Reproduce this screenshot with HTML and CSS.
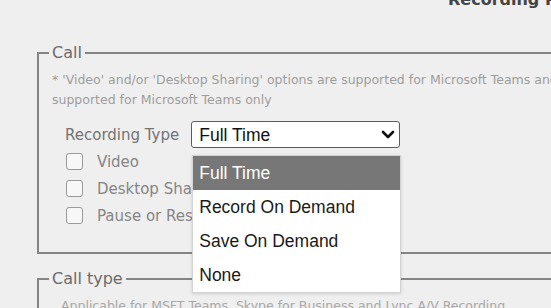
FILE: index.html
```html
<!DOCTYPE html>
<html lang="en">
<head>
  <meta charset="UTF-8">
  <meta name="viewport" content="width=device-width, initial-scale=1.0">
  <title>Recording Profile</title>
  <link rel="stylesheet" href="styles.css">
</head>
<body>
  <!-- Page title -->
  <div class="page-title">Recording Profile</div>

  <div class="form-area">
    <!-- Call options -->
    <fieldset class="group">
      <legend>Call</legend>
      <p class="note">* 'Video' and/or 'Desktop Sharing' options are supported for Microsoft Teams and Skype for Business.<br>supported for Microsoft Teams only</p>

      <div class="field-row">
        <label class="field-label" for="rec-type">Recording Type</label>
        <div class="select-wrap">
          <select id="rec-type" class="select">
            <option>Full Time</option>
            <option>Record On Demand</option>
            <option>Save On Demand</option>
            <option>None</option>
          </select>
          <svg class="chevron" width="14" height="9" viewBox="0 0 14 9">
            <path d="M2 2 L7 7 L12 2" fill="none" stroke="#111" stroke-width="2.6" stroke-linecap="round" stroke-linejoin="round"/>
          </svg>

          <!-- Open dropdown list -->
          <ul class="dropdown">
            <li class="selected">Full Time</li>
            <li>Record On Demand</li>
            <li>Save On Demand</li>
            <li>None</li>
          </ul>
        </div>
      </div>

      <label class="check-row"><input type="checkbox" class="check"> Video</label>
      <label class="check-row"><input type="checkbox" class="check"> Desktop Sharing*</label>
      <label class="check-row"><input type="checkbox" class="check"> Pause or Resume Recording</label>
    </fieldset>

    <!-- Call type -->
    <fieldset class="group group-type">
      <legend>Call type</legend>
      <p class="note note-indent">Applicable for MSFT Teams, Skype for Business and Lync A/V Recording</p>
    </fieldset>
  </div>
</body>
</html>
```

FILE: styles.css
```css
body {
  margin: 0;
  height: 308px;
  overflow: hidden;
  background: #f0efef;
  font-family: "DejaVu Sans", Verdana, sans-serif;
  color: #666;
}

.page-title {
  margin-top: -10px;
  padding-left: 448px;
  font-size: 16px;
  line-height: 19px;
  font-weight: bold;
  color: #444;
  white-space: nowrap;
}

.form-area {
  padding-left: 37px;
}

/* Fieldsets */
.group {
  width: 700px;
  margin: 34px 0 0;
  padding: 8px 0 23px 13px;
  border: 2px solid #858585;
  box-sizing: border-box;
}

.group legend {
  margin-left: -3px;
  padding: 0 3px;
  font-size: 16px;
  line-height: 19px;
  color: #6b6b6b;
}

.group-type {
  margin-top: 15px;
}

.note {
  margin: 0;
  font-size: 12.5px;
  line-height: 20px;
  color: #9d9d9d;
  white-space: nowrap;
}

.note-indent {
  padding-left: 9px;
  color: #a8a8a8;
}

/* Recording type row */
.field-row {
  display: flex;
  align-items: center;
  gap: 12px;
  margin: 11px 0 0 13px;
}

.field-label {
  font-size: 15px;
  color: #737373;
}

.select-wrap {
  position: relative;
}

.select {
  display: block;
  width: 209px;
  height: 27px;
  margin: 0;
  padding: 0 0 0 7px;
  appearance: none;
  -webkit-appearance: none;
  background: #fff;
  border: 1px solid #5c5c5c;
  border-radius: 3px;
  font-family: "Liberation Sans", Arial, sans-serif;
  font-size: 17.5px;
  color: #111;
}

.chevron {
  position: absolute;
  right: 5px;
  top: 9px;
}

.dropdown {
  position: absolute;
  top: 34px;
  left: 1px;
  width: 207px;
  margin: 0;
  padding: 0;
  list-style: none;
  background: #fff;
  border: 1px solid #d4d4d4;
  box-shadow: 0 1px 3px rgba(0, 0, 0, 0.15);
  font-family: "Liberation Sans", Arial, sans-serif;
  font-size: 17.5px;
  color: #1a1a1a;
}

.dropdown li {
  height: 34px;
  line-height: 34px;
  padding-left: 6px;
}

.dropdown li.selected {
  background: #777;
  color: #fff;
}

/* Checkbox rows */
.check-row {
  display: flex;
  align-items: center;
  gap: 14px;
  height: 27px;
  margin-left: 14px;
  font-size: 15px;
  color: #858585;
  white-space: nowrap;
}

.check {
  appearance: none;
  -webkit-appearance: none;
  width: 17px;
  height: 17px;
  margin: 0;
  background: #f7f7f7;
  border: 1.5px solid #9a9a9a;
  border-radius: 3px;
}
```
